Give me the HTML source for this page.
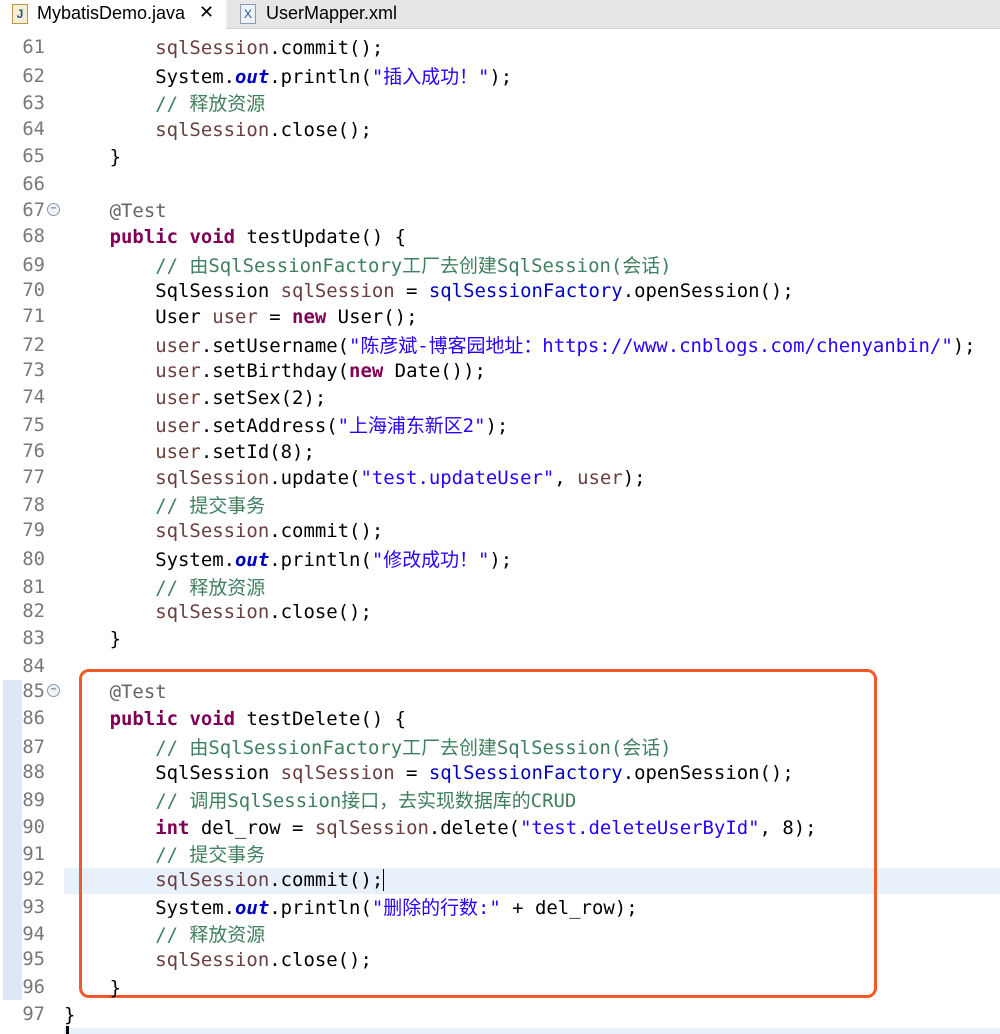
<!DOCTYPE html>
<html><head><meta charset="utf-8"><style>
body{margin:0;width:1000px;height:1034px;background:#fff;position:relative;overflow:hidden;font-family:"DejaVu Sans Mono","Liberation Mono","Noto Sans CJK SC",monospace;}
.tabs{position:absolute;left:0;top:0;width:1000px;height:28px;background:#ececec;border-bottom:1px solid #d0d0d0;font-family:"Liberation Sans",sans-serif;font-size:18px;}
.t1{position:absolute;left:0;top:0;width:226px;height:29px;background:#fff;}
.t2{position:absolute;left:228px;top:0;width:772px;height:28px;background:#e6e6e6;}
.l{position:absolute;left:64px;font-size:18.95px;white-space:pre;color:#000;height:26px;line-height:26px;}
.n{position:absolute;left:0;width:45px;text-align:right;font-size:18.8px;color:#787878;line-height:26px;}
.k{color:#7f0055;font-weight:bold}.s{color:#2a00ff}.c{color:#3f7f5f;font-family:"DejaVu Sans Mono","Noto Sans CJK SC",monospace}.f{color:#0000c0;font-style:italic;font-weight:bold}.v{color:#6a3e3e}.a{color:#646464}.fs{color:#0000c0}
</style></head><body>
<div class="tabs">
<div class="t1"><span style="position:absolute;left:12px;top:4px;width:14px;height:18px;border:1px solid #b89a4a;background:#f6efd6;color:#2a4fa0;font-size:12px;font-weight:bold;text-align:center;line-height:18px">J</span><span style="position:absolute;left:37px;top:3px">MybatisDemo.java</span><span style="position:absolute;left:199px;top:2px;font-size:18px">✕</span></div>
<div class="t2"><span style="position:absolute;left:12px;top:4px;width:14px;height:18px;border:1px solid #8a9ab8;background:#eef2f8;color:#2a4fa0;font-size:12px;text-align:center;line-height:18px">X</span><span style="position:absolute;left:38px;top:3px">UserMapper.xml</span></div>
</div>
<div style="position:absolute;left:3px;top:680px;width:19px;height:320px;background:#dde8f7"></div>
<div style="position:absolute;left:64px;top:868px;width:936px;height:26px;background:#e8f0fb"></div>
<div style="position:absolute;left:64px;top:1028px;width:936px;height:6px;background:#e8f0fb"></div>
<div style="position:absolute;left:79px;top:669px;width:792px;height:323px;border:3px solid #f05a28;border-radius:10px"></div>
<div style="position:absolute;left:47px;top:203px;width:11px;height:11px;border:1px solid #8899aa;border-radius:50%;background:#f0f4f8;font-size:10px;line-height:10px;text-align:center;color:#556">−</div>
<div style="position:absolute;left:47px;top:684px;width:11px;height:11px;border:1px solid #8899aa;border-radius:50%;background:#f0f4f8;font-size:10px;line-height:10px;text-align:center;color:#556">−</div>

<div class="n" style="top:35px">61</div><div class="l" style="top:35px">        <span class="v">sqlSession</span>.commit();</div>
<div class="n" style="top:64px">62</div><div class="l" style="top:64px">        System.<span class="f">out</span>.println(<span class="s">"插入成功！"</span>);</div>
<div class="n" style="top:91px">63</div><div class="l" style="top:91px">        <span class="c">// 释放资源</span></div>
<div class="n" style="top:117px">64</div><div class="l" style="top:117px">        <span class="v">sqlSession</span>.close();</div>
<div class="n" style="top:144px">65</div><div class="l" style="top:144px">    }</div>
<div class="n" style="top:172px">66</div>
<div class="n" style="top:198px">67</div><div class="l" style="top:198px">    <span class="a">@Test</span></div>
<div class="n" style="top:224px">68</div><div class="l" style="top:224px">    <span class="k">public</span> <span class="k">void</span> testUpdate() {</div>
<div class="n" style="top:253px">69</div><div class="l" style="top:253px">        <span class="c">// 由SqlSessionFactory工厂去创建SqlSession(会话)</span></div>
<div class="n" style="top:278px">70</div><div class="l" style="top:278px">        SqlSession <span class="v">sqlSession</span> = <span class="fs">sqlSessionFactory</span>.openSession();</div>
<div class="n" style="top:304px">71</div><div class="l" style="top:304px">        User <span class="v">user</span> = <span class="k">new</span> User();</div>
<div class="n" style="top:333px">72</div><div class="l" style="top:333px">        <span class="v">user</span>.setUsername(<span class="s">"陈彦斌-博客园地址：https://www.cnblogs.com/chenyanbin/"</span>);</div>
<div class="n" style="top:358px">73</div><div class="l" style="top:358px">        <span class="v">user</span>.setBirthday(<span class="k">new</span> Date());</div>
<div class="n" style="top:385px">74</div><div class="l" style="top:385px">        <span class="v">user</span>.setSex(2);</div>
<div class="n" style="top:413px">75</div><div class="l" style="top:413px">        <span class="v">user</span>.setAddress(<span class="s">"上海浦东新区2"</span>);</div>
<div class="n" style="top:439px">76</div><div class="l" style="top:439px">        <span class="v">user</span>.setId(8);</div>
<div class="n" style="top:465px">77</div><div class="l" style="top:465px">        <span class="v">sqlSession</span>.update(<span class="s">"test.updateUser"</span>, <span class="v">user</span>);</div>
<div class="n" style="top:493px">78</div><div class="l" style="top:493px">        <span class="c">// 提交事务</span></div>
<div class="n" style="top:518px">79</div><div class="l" style="top:518px">        <span class="v">sqlSession</span>.commit();</div>
<div class="n" style="top:547px">80</div><div class="l" style="top:547px">        System.<span class="f">out</span>.println(<span class="s">"修改成功！"</span>);</div>
<div class="n" style="top:575px">81</div><div class="l" style="top:575px">        <span class="c">// 释放资源</span></div>
<div class="n" style="top:599px">82</div><div class="l" style="top:599px">        <span class="v">sqlSession</span>.close();</div>
<div class="n" style="top:626px">83</div><div class="l" style="top:626px">    }</div>
<div class="n" style="top:654px">84</div>
<div class="n" style="top:679px">85</div><div class="l" style="top:679px">    <span class="a">@Test</span></div>
<div class="n" style="top:706px">86</div><div class="l" style="top:706px">    <span class="k">public</span> <span class="k">void</span> testDelete() {</div>
<div class="n" style="top:735px">87</div><div class="l" style="top:735px">        <span class="c">// 由SqlSessionFactory工厂去创建SqlSession(会话)</span></div>
<div class="n" style="top:760px">88</div><div class="l" style="top:760px">        SqlSession <span class="v">sqlSession</span> = <span class="fs">sqlSessionFactory</span>.openSession();</div>
<div class="n" style="top:788px">89</div><div class="l" style="top:788px">        <span class="c">// 调用SqlSession接口，去实现数据库的CRUD</span></div>
<div class="n" style="top:815px">90</div><div class="l" style="top:815px">        <span class="k">int</span> del_row = <span class="v">sqlSession</span>.delete(<span class="s">"test.deleteUserById"</span>, 8);</div>
<div class="n" style="top:842px">91</div><div class="l" style="top:842px">        <span class="c">// 提交事务</span></div>
<div class="n" style="top:867px">92</div><div class="l" style="top:867px">        <span class="v">sqlSession</span>.commit();<span style="border-left:1px solid #000"> </span></div>
<div class="n" style="top:895px">93</div><div class="l" style="top:895px">        System.<span class="f">out</span>.println(<span class="s">"删除的行数:"</span> + del_row);</div>
<div class="n" style="top:922px">94</div><div class="l" style="top:922px">        <span class="c">// 释放资源</span></div>
<div class="n" style="top:947px">95</div><div class="l" style="top:947px">        <span class="v">sqlSession</span>.close();</div>
<div class="n" style="top:975px">96</div><div class="l" style="top:975px">    }</div>
<div class="n" style="top:1002px">97</div><div class="l" style="top:1002px">}</div>
<div style="position:absolute;left:66px;top:1026px;width:3px;height:8px;background:#000"></div>
</body></html>
